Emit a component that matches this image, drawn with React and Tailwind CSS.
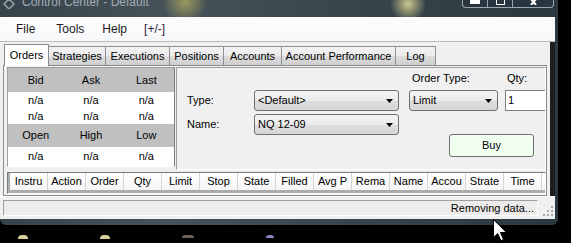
const tabs = [
  { label: "Orders", cls: "w-[45px] h-[22px] bg-white border-[#898c95] -mb-px z-10", active: true },
  { label: "Strategies", cls: "w-[57px]" },
  { label: "Executions", cls: "w-[64px]" },
  { label: "Positions", cls: "w-[54px]" },
  { label: "Accounts", cls: "w-[58px]" },
  { label: "Account Performance", cls: "w-[114px]" },
  { label: "Log", cls: "w-[40px]" },
];

const orderCols = [
  "Instru", "Action", "Order", "Qty", "Limit", "Stop", "State",
  "Filled", "Avg P", "Rema", "Name", "Accou", "Strate", "Time",
];

const Arrow = () => (
  <svg width="7" height="4" viewBox="0 0 7 4" className="shrink-0">
    <path d="M0 0h7L3.5 4z" fill="#000" />
  </svg>
);

const Combo = ({ value, className }) => (
  <div
    className={`h-[21px] shrink-0 flex items-center justify-between pl-[3px] pr-[5px] rounded-[3px] border border-[#707070] bg-[linear-gradient(#f4f4f4_0%,#ebebeb_50%,#dddddd_51%,#d6d6d6_100%)] text-[11px] text-black ${className}`}
  >
    <span>{value}</span>
    <Arrow />
  </div>
);

const QuoteRow = ({ items, className }) => (
  <div className={`grid grid-cols-3 items-center text-center text-[11px] text-black ${className}`}>
    {items.map((t, i) => (
      <span key={i}>{t}</span>
    ))}
  </div>
);

export default function App() {
  return (
    <div className="relative w-[571px] h-[243px] overflow-hidden bg-black font-['Liberation_Sans',Arial,sans-serif]">
      <div className="w-[558px] flex flex-col rounded-b-[6px] bg-[linear-gradient(90deg,#37434b_0%,#46535a_30%,#3a464d_60%,#2c3840_100%)] pr-[3px] pb-[6px]">
        {/* title bar */}
        <div className="h-[17px] flex items-start bg-[radial-gradient(circle_at_185px_2px,#9a9a5c_0px,transparent_22px),radial-gradient(circle_at_408px_4px,#c9c98c_0px,transparent_18px)]">
          <svg width="12" height="10" viewBox="0 0 12 10" className="ml-[3px] mt-[-1px]">
            <path d="M6 0l5 5-5 5-5-5z" fill="none" stroke="#9aa4aa" strokeWidth="1.5" />
          </svg>
          <span className="ml-[7px] mt-[-5px] text-[12px] leading-[15px] text-[#a3acb1]">
            Control Center - Default
          </span>
          <div className="ml-auto mr-[1px] flex h-[8px] rounded-b-[4px] border border-t-0 border-[#9aa5ad] bg-[#2a363f] overflow-hidden">
            <div className="w-[25px] flex justify-center border-r border-[#9aa5ad]">
              <div className="w-[10px] h-[4px] bg-white" />
            </div>
            <div className="w-[25px] flex justify-center border-r border-[#9aa5ad]">
              <div className="w-[9px] h-[5px] border border-t-0 border-white" />
            </div>
            <div className="w-[40px] flex justify-center">
              <svg width="9" height="5" viewBox="0 0 9 5">
                <path d="M1 -2l6 7M8 -2l-6 7" stroke="#fff" strokeWidth="2" />
              </svg>
            </div>
          </div>
        </div>

        {/* client area */}
        <div className="bg-[#f0f0f0] flex flex-col">
          {/* menu */}
          <div className="h-[25px] flex items-center bg-[linear-gradient(#fdfdfd,#f6f7f9)] border-b border-[#b9bcc0] text-[12px] text-[#1b1b1b]">
            <span className="ml-[16px]">File</span>
            <span className="ml-[21px]">Tools</span>
            <span className="ml-[18px]">Help</span>
            <span className="ml-[17px] text-[#2b1a3a]">[+/-]</span>
          </div>

          <div className="flex">
            <div className="flex flex-col w-[550px]">
              {/* tabs */}
              <div className="h-[23px] flex items-end pl-[4px]">
                {tabs.map((t) => (
                  <div
                    key={t.label}
                    className={`relative shrink-0 flex items-center justify-center border border-b-0 text-[11px] text-black ${
                      t.active
                        ? t.cls
                        : `${t.cls} h-[19px] border-l-0 border-[#8e8f8f] bg-[linear-gradient(#f3f3f3,#ebebeb_50%,#dddddd_51%,#cfcfcf)]`
                    }`}
                  >
                    {t.label}
                  </div>
                ))}
              </div>

              {/* tab page */}
              <div className="ml-[3px] w-[544px] h-[131px] border border-[#898c95] bg-[#f0f0f0] pl-[3px] pt-[1px]">
                <div className="flex gap-[1px]">
                  {/* quote grid */}
                  <div className="w-[168px] h-[100px] shrink-0 border border-t-[#a0a0a0] border-l-[#a0a0a0] border-b-white border-r-[#7a7a7a] bg-white flex flex-col">
                    <QuoteRow items={["Bid", "Ask", "Last"]} className="h-[24px] bg-[#c0c0c0]" />
                    <QuoteRow items={["n/a", "n/a", "n/a"]} className="h-[16px]" />
                    <QuoteRow items={["n/a", "n/a", "n/a"]} className="h-[16px]" />
                    <QuoteRow items={["Open", "High", "Low"]} className="h-[23px] bg-[#c0c0c0]" />
                    <QuoteRow items={["n/a", "n/a", "n/a"]} className="h-[19px]" />
                  </div>

                  {/* order entry */}
                  <div className="w-[370px] h-[103px] shrink-0 border border-[#a0a0a0] border-b-white border-r-white flex overflow-hidden text-[11px] text-black">
                    <div className="w-[232px] shrink-0 flex flex-col pt-[22px]">
                      <div className="flex items-center">
                        <span className="w-[77px] pl-[10px]">Type:</span>
                        <Combo value="<Default>" className="w-[145px]" />
                      </div>
                      <div className="flex items-center mt-[3px]">
                        <span className="w-[77px] pl-[10px]">Name:</span>
                        <Combo value="NQ 12-09" className="w-[145px]" />
                      </div>
                    </div>
                    <div className="flex flex-col min-w-0 pt-[4px]">
                      <div className="flex h-[13px] leading-[13px]">
                        <span className="ml-[3px] w-[95px] shrink-0">Order Type:</span>
                        <span>Qty:</span>
                      </div>
                      <div className="flex mt-[5px]">
                        <Combo value="Limit" className="w-[89px]" />
                        <div className="ml-[7px] w-[45px] shrink-0 h-[21px] border border-[#7b7f86] bg-white pl-[2px] flex items-center">
                          1
                        </div>
                      </div>
                      <button className="ml-[40px] mt-[23px] w-[85px] shrink-0 h-[23px] rounded-[3px] border border-[#707070] bg-[#f0fff0] text-[11px] text-black">
                        Buy
                      </button>
                    </div>
                  </div>
                </div>

                {/* orders grid */}
                <div className="mt-[2px] w-[539px] h-[22px] border border-[#7a7a7a] border-b-white border-r-white bg-[#ababab] pl-[2px] flex flex-col">
                  <div className="flex h-[17px] bg-[linear-gradient(#ffffff,#f4f4f4)]">
                    {orderCols.map((c) => (
                      <div
                        key={c}
                        className="w-[38px] shrink-0 overflow-hidden whitespace-nowrap text-center border-r border-[#d5d5d5] text-[11px] leading-[17px] text-black"
                      >
                        {c}
                      </div>
                    ))}
                  </div>
                </div>
              </div>
            </div>
            <div className="flex-1 bg-[#1c1f22]" />
          </div>

          {/* status bar */}
          <div className="h-[23px] flex items-center border-t border-white bg-[#f0f0f0]">
            <div className="ml-[3px] w-[535px] h-[16px] border border-t-[#a0a0a0] border-l-[#a0a0a0] border-b-white border-r-white bg-[#eeecea] flex items-center justify-end pr-[3px] text-[11px] text-black">
              Removing data...
            </div>
            <svg width="10" height="10" viewBox="0 0 10 10" className="ml-[5px] mt-[6px]">
              {[[8, 0], [8, 4], [4, 4], [8, 8], [4, 8], [0, 8]].map(([x, y], i) => (
                <rect key={i} x={x} y={y} width="2" height="2" fill="#a8a8a8" />
              ))}
            </svg>
          </div>
        </div>
      </div>

      {/* desktop below */}
      <div className="flex gap-[72px] ml-[18px] mt-[10px]">
        <div className="w-[10px] h-[4px] rounded-t-full bg-[#d8cf9a]" />
        <div className="w-[10px] h-[4px] rounded-t-full bg-[#d8cf9a]" />
        <div className="w-[12px] h-[3px] rounded-t-full bg-[#6a625a]" />
        <div className="w-[8px] h-[3px] rounded-t-full bg-[#8a86c0]" />
      </div>

      {/* mouse cursor */}
      <svg
        width="14"
        height="24"
        viewBox="0 0 14 24"
        className="absolute left-[493px] top-[219px]"
      >
        <path d="M0.5 0.5v18l4.2-4 3.2 7.2 2.6-1.2-3.1-7h6z" fill="#fff" stroke="#000" strokeWidth="1" />
      </svg>
    </div>
  );
}
